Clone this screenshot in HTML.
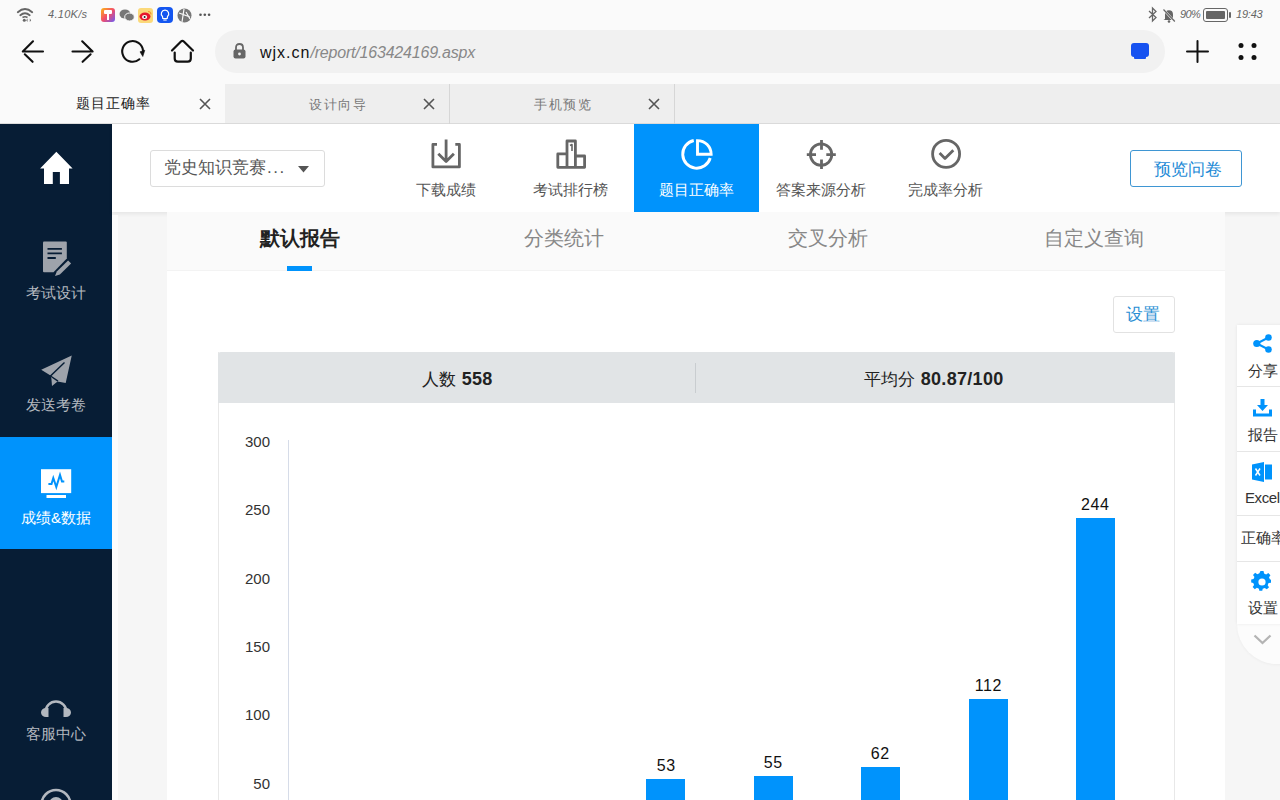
<!DOCTYPE html>
<html><head><meta charset="utf-8">
<style>
*{margin:0;padding:0;box-sizing:border-box}
html,body{width:1280px;height:800px;overflow:hidden;background:#f6f6f6;font-family:"Liberation Sans",sans-serif;position:relative}
.a{position:absolute}
.t{position:absolute;white-space:nowrap;line-height:1}
svg{position:absolute;overflow:visible}
</style></head><body>
<!-- status bar + toolbar -->
<div class="a" style="left:0;top:0;width:1280px;height:84px;background:#fafafa"></div>
<!-- wifi -->
<svg style="left:0;top:0" width="40" height="30" viewBox="0 0 40 30"><path d="M17.8 12.2 Q25 5.8 32.2 12.2" fill="none" stroke="#666" stroke-width="1.9" stroke-linecap="round"/><path d="M20.3 15.2 Q25 11.2 29.7 15.2" fill="none" stroke="#666" stroke-width="1.9" stroke-linecap="round"/><circle cx="24.3" cy="20.3" r="1.5" fill="#666"/><path d="M27.5 18.6 L27.5 22 L26.2 20.3Z M29.8 18.6 L29.8 22 L31.1 20.3Z" fill="#666"/><path d="M22.5 17.5 Q25 16 27.5 17.5" fill="none" stroke="#666" stroke-width="1.6"/></svg>
<div class="t" style="left:48px;top:9px;font-size:11px;color:#666;font-style:italic;letter-spacing:0.3px">4.10K/s</div>
<div class="a" style="left:101px;top:8px;width:14px;height:14px;border-radius:3px;background:linear-gradient(135deg,#fdb813,#f24d6b 50%,#6a5cf5)"></div>
<div class="a" style="left:104px;top:10px;width:8px;height:4px;background:#fff;border-radius:1px"></div><div class="a" style="left:107px;top:13px;width:2px;height:7px;background:#fff"></div>
<svg style="left:119px;top:8px" width="16" height="14" viewBox="0 0 16 14"><ellipse cx="6" cy="6" rx="5.5" ry="4.6" fill="#777"/><ellipse cx="10.5" cy="9" rx="4.8" ry="4" fill="#777" stroke="#fafafa" stroke-width="1"/></svg>
<div class="a" style="left:138px;top:8px;width:15px;height:15px;border-radius:3px;background:#fbd97a"></div>
<svg style="left:139px;top:10px" width="13" height="11" viewBox="0 0 13 11"><ellipse cx="6" cy="6.5" rx="5.5" ry="4" fill="#e6162d"/><ellipse cx="5.6" cy="7" rx="2.6" ry="2" fill="#fff"/><circle cx="5.6" cy="7" r="1" fill="#222"/><path d="M9 1.5 Q12 1.5 12 4.5" stroke="#f29a2e" stroke-width="1.2" fill="none"/></svg>
<div class="a" style="left:157px;top:7px;width:16px;height:16px;border-radius:4px;background:#1456f0"></div>
<svg style="left:157px;top:7px" width="16" height="16" viewBox="0 0 16 16"><path d="M8 3.2 A3.6 3.6 0 0 1 10.5 9.5 L10.2 11.5 L5.8 11.5 L5.5 9.5 A3.6 3.6 0 0 1 8 3.2Z" fill="none" stroke="#fff" stroke-width="1.2"/><path d="M6.3 13 L9.7 13" stroke="#fff" stroke-width="1.1"/></svg>
<svg style="left:177px;top:8px" width="15" height="15" viewBox="0 0 15 15"><circle cx="7.5" cy="7.5" r="7" fill="#777"/><path d="M2 5 L13 9 M7 1 L5 14 M9 4 L13 11" stroke="#fafafa" stroke-width="1.2" fill="none"/></svg>
<svg style="left:0;top:0" width="220" height="30"><circle cx="200.5" cy="14.8" r="1.3" fill="#555"/><circle cx="204.8" cy="14.8" r="1.3" fill="#555"/><circle cx="209.1" cy="14.8" r="1.3" fill="#555"/></svg>

<!-- right status -->
<svg style="left:1147px;top:7px" width="11" height="15" viewBox="0 0 11 15"><path d="M2 4 L9 10.5 L5.5 14 L5.5 1 L9 4.5 L2 11" fill="none" stroke="#666" stroke-width="1.3"/></svg>
<svg style="left:1162px;top:8px" width="14" height="15" viewBox="0 0 14 15"><path d="M3 11 L3 6.5 Q3 2.2 7 2.2 Q11 2.2 11 6.5 L11 11 L12.5 12 L1.5 12Z" fill="#666"/><circle cx="7" cy="13.5" r="1.3" fill="#666"/><path d="M1 1 L13 14" stroke="#fafafa" stroke-width="2.2"/><path d="M1.5 1.5 L12.8 13.5" stroke="#666" stroke-width="1.2"/></svg>
<div class="t" style="left:1180px;top:9px;font-size:11px;color:#666;font-style:italic;letter-spacing:-0.6px">90%</div>
<div class="a" style="left:1203px;top:8px;width:25px;height:14px;border:1.6px solid #666;border-radius:3px"></div>
<div class="a" style="left:1206px;top:11px;width:19px;height:8px;background:#666;border-radius:1px"></div>
<div class="a" style="left:1229px;top:12px;width:2px;height:6px;background:#666;border-radius:1px"></div>
<div class="t" style="left:1236px;top:9px;font-size:11px;color:#666;font-style:italic;letter-spacing:-0.2px">19:43</div>

<!-- nav buttons -->
<svg style="left:0;top:0" width="100" height="80" viewBox="0 0 100 80"><path d="M33 41.3 L22.8 51.5 L43 51.5 M24.8 54.3 L32.6 61.8" fill="none" stroke="#111" stroke-width="2.1" stroke-linecap="round" stroke-linejoin="round"/><path d="M82.2 41.3 L92.6 51.5 L72.5 51.5 M90.6 54.3 L82.6 61.8" fill="none" stroke="#111" stroke-width="2.1" stroke-linecap="round" stroke-linejoin="round"/></svg>

<svg style="left:0;top:0" width="220" height="80" viewBox="0 0 220 80"><path d="M139.4 59.3 A10.4 10.4 0 1 1 143 50.5" fill="none" stroke="#111" stroke-width="2.1" stroke-linecap="round"/><path d="M140 51.8 L144.8 50.2 L142.8 56.5 Z" fill="#111" stroke="#111" stroke-width="0.6" stroke-linejoin="round"/><path d="M174.7 52.5 L174.7 58.5 Q174.7 61.6 177.8 61.6 L187.7 61.6 Q190.8 61.6 190.8 58.5 L190.8 52.5 M172 50.5 L181 41.5 Q182.4 40.1 183.8 41.5 L193 50.5" fill="none" stroke="#111" stroke-width="2.2" stroke-linecap="round" stroke-linejoin="round"/></svg>


<!-- url bar -->
<div class="a" style="left:215px;top:30px;width:950px;height:43px;border-radius:21.5px;background:#f1f1f1"></div>
<svg style="left:233px;top:43px" width="13" height="16" viewBox="0 0 13 16"><path d="M3 7 L3 4.5 Q3 1 6.5 1 Q10 1 10 4.5 L10 7" fill="none" stroke="#666" stroke-width="1.8"/><rect x="0.5" y="6.5" width="12" height="9" rx="2" fill="#666"/><circle cx="6.5" cy="11" r="1.4" fill="#f1f1f1"/></svg>
<div class="t" style="left:260px;top:45px;font-size:16px;color:#111;letter-spacing:1px">wjx.cn<span style="color:#888;font-style:italic;letter-spacing:-0.2px">/report/163424169.aspx</span></div>
<div class="a" style="left:1131px;top:43px;width:18px;height:14px;border-radius:3px;background:#1652f0"></div>
<div class="a" style="left:1134px;top:56px;width:12px;height:3px;border-radius:1px;background:#1652f0"></div>
<svg style="left:1186px;top:40px" width="23" height="23" viewBox="0 0 23 23"><path d="M11.5 1 L11.5 22 M1 11.5 L22 11.5" stroke="#111" stroke-width="2" stroke-linecap="round"/></svg>
<svg style="left:1238px;top:42px" width="20" height="19" viewBox="0 0 20 19"><circle cx="3" cy="3.5" r="2.5" fill="#111"/><circle cx="16" cy="3.5" r="2.5" fill="#111"/><circle cx="3" cy="15.5" r="2.5" fill="#111"/><circle cx="16" cy="15.5" r="2.5" fill="#111"/></svg>

<!-- tabs -->
<div class="a" style="left:0;top:84px;width:1280px;height:40px;background:#eeeeee;border-bottom:1px solid #dcdcdc"></div>
<div class="a" style="left:0;top:84px;width:225px;height:40px;background:#fafafa;border-bottom:1px solid #dcdcdc"></div>
<div class="a" style="left:449px;top:84px;width:1px;height:40px;background:#d6d6d6"></div>
<div class="a" style="left:674px;top:84px;width:1px;height:40px;background:#d6d6d6"></div>
<div class="t" style="left:76px;top:97px;font-size:13.5px;color:#222;letter-spacing:1px">题目正确率</div>
<div class="t" style="left:309px;top:97.5px;font-size:13px;color:#777;letter-spacing:1.5px">设计向导</div>
<div class="t" style="left:534px;top:97.5px;font-size:13px;color:#777;letter-spacing:1.5px">手机预览</div>
<svg style="left:199px;top:98px" width="12" height="12" viewBox="0 0 12 12"><path d="M1 1 L11 11 M11 1 L1 11" stroke="#555" stroke-width="1.6"/></svg>
<svg style="left:423px;top:98px" width="12" height="12" viewBox="0 0 12 12"><path d="M1 1 L11 11 M11 1 L1 11" stroke="#555" stroke-width="1.6"/></svg>
<svg style="left:648px;top:98px" width="12" height="12" viewBox="0 0 12 12"><path d="M1 1 L11 11 M11 1 L1 11" stroke="#555" stroke-width="1.6"/></svg>

<!-- sidebar -->
<div class="a" style="left:0;top:124px;width:112px;height:676px;background:#071d35"></div>
<div class="a" style="left:0;top:437px;width:112px;height:112px;background:#0093fc"></div>
<svg style="left:0;top:0" width="112" height="800" viewBox="0 0 112 800">
<path d="M56.35 151.8 L72.6 168.6 L69 168.6 L69 184 L59.9 184 L59.9 172.1 L52.8 172.1 L52.8 184 L44 184 L44 168.6 L40.1 168.6 Z" fill="#fff"/>
<path d="M43 242.5 Q43 241.5 44 241.5 L65.8 241.5 Q66.8 241.5 66.8 242.5 L66.8 258.5 L53.5 272.3 L44 272.3 Q43 272.3 43 271.3 Z" fill="#9ea3ab"/>
<path d="M47.5 248.9 L61.9 248.9 M47.5 253.3 L61.9 253.3 M47.5 258 L55.8 258" stroke="#071d35" stroke-width="1.8"/>
<path d="M68.1 260.6 L71.1 263.6 L59.9 274.4 L55 276 L56.8 271.4 Z" fill="#9ea3ab"/>
<path d="M71.75 355.5 L41.2 369.8 L50.5 375.5 L51.4 378.6 L52 386 L57.5 381.6 L65.7 383 Z" fill="#9ea3ab"/>
<path d="M64.5 362.5 L50.5 376 L58 381.2" fill="none" stroke="#071d35" stroke-width="1.4"/>
<rect x="41" y="469.2" width="30.2" height="23.9" fill="#fff"/>
<rect x="46.5" y="495" width="19.5" height="3" fill="#fff"/>
<path d="M48.4 484 L51.5 484 L53.3 478 L56.3 487 L60 475 L62 481.5 L64.3 481.5" fill="none" stroke="#0093fc" stroke-width="2" stroke-linejoin="miter"/>
</svg>
<div class="t" style="left:26px;top:285px;font-size:15px;color:#b3b8bf">考试设计</div>

<div class="t" style="left:26px;top:397px;font-size:15px;color:#b3b8bf">发送考卷</div>

<div class="t" style="left:21px;top:510px;font-size:15px;color:#fff">成绩&amp;数据</div>
<svg style="left:0;top:0" width="112" height="800" viewBox="0 0 112 800"><path d="M45.5 712 A10.5 10.5 0 0 1 66.5 712" fill="none" stroke="#b3b8bf" stroke-width="2.4"/><path d="M48.5 708 L48.5 717 L46 717 A5 4.5 0 0 1 46 708 Z M63.5 708 L63.5 717 L66 717 A5 4.5 0 0 0 66 708 Z" fill="#b3b8bf"/><circle cx="56" cy="804.5" r="14.5" fill="none" stroke="#b3b8bf" stroke-width="2.6"/><circle cx="56" cy="804" r="7" fill="#b3b8bf"/></svg>
<div class="t" style="left:26px;top:726px;font-size:15px;color:#b3b8bf">客服中心</div>


<!-- header -->
<div class="a" style="left:112px;top:124px;width:1168px;height:88px;background:#fff;box-shadow:0 2px 4px rgba(0,0,0,.07)"></div>
<div class="a" style="left:150px;top:150px;width:175px;height:37px;border:1px solid #dcdcdc;border-radius:3px;background:#fff"></div>
<div class="t" style="left:164px;top:159px;font-size:17px;color:#555">党史知识竞赛<span style="letter-spacing:1.5px;margin-left:1px">...</span></div>
<svg style="left:298px;top:166px" width="11" height="7" viewBox="0 0 11 7"><path d="M0 0 L11 0 L5.5 6.5Z" fill="#555"/></svg>

<div class="a" style="left:634px;top:124px;width:125px;height:88px;background:#0093fc"></div>
<svg style="left:0;top:0" width="1280" height="800" viewBox="0 0 1280 800">
<g fill="none" stroke="#666" stroke-width="2.8" stroke-linecap="butt" stroke-linejoin="round">
<path d="M437 144.4 L432.9 144.4 L432.9 166.9 L459.4 166.9 L459.4 144.4 L455.3 144.4"/>
<path d="M446.1 139.5 L446.1 161.5 M438.3 153.7 L446.1 161.5 L453.9 153.7"/>
<path d="M557.8 167.3 L557.8 153.9 L567 153.9 L567 141 L575.4 141 L575.4 156 L584.6 156 L584.6 167.3 Z M567 153.9 L567 167.3 M575.4 156 L575.4 167.3"/>
<path d="M570 145.5 L572 144.5 L572 151" stroke-width="1.6"/>
<circle cx="821.1" cy="154.6" r="10.7"/>
<path d="M821.5 140 L821.5 149.8 M821.5 159.5 L821.5 169 M806.8 154.6 L816 154.6 M826.3 154.6 L835.8 154.6"/>
<circle cx="946.1" cy="153.9" r="13.5"/>
<path d="M939.6 153.1 L945 158.5 L953.3 150.2"/>
</g>
<g fill="none" stroke="#fff" stroke-width="2.9">
<path d="M693.75 140.5 A14 14 0 1 0 710.2 158"/>
<path d="M697.5 154.25 L697.5 140.6 A13.65 13.65 0 0 1 711.15 154.25 Z" stroke-linejoin="miter"/>
</g>
</svg>
<div class="t" style="left:416px;top:182px;font-size:15px;color:#555">下载成绩</div>
<div class="t" style="left:533px;top:182px;font-size:15px;color:#555">考试排行榜</div>
<div class="t" style="left:659px;top:182px;font-size:15px;color:#fff">题目正确率</div>
<div class="t" style="left:776px;top:182px;font-size:15px;color:#555">答案来源分析</div>
<div class="t" style="left:908px;top:182px;font-size:15px;color:#555">完成率分析</div>

<div class="a" style="left:1130px;top:150px;width:112px;height:37px;border:1px solid #3f96d3;border-radius:3px;background:#fff"></div>
<div class="t" style="left:1154px;top:161px;font-size:17.3px;color:#1d8ad6">预览问卷</div>

<!-- content card -->
<div class="a" style="left:167px;top:212px;width:1058px;height:588px;background:#fff"></div>
<div class="a" style="left:112px;top:215px;width:6px;height:585px;background:#fcfcfc"></div>
<div class="a" style="left:167px;top:212px;width:1058px;height:59px;background:#fafafa;border-bottom:1px solid #f3f3f3"></div>
<div class="t" style="left:260px;top:228px;font-size:20px;color:#222;font-weight:bold">默认报告</div>
<div class="a" style="left:287px;top:266px;width:25px;height:5px;background:#0093fc"></div>
<div class="t" style="left:524px;top:228px;font-size:20px;color:#888">分类统计</div>
<div class="t" style="left:788px;top:228px;font-size:20px;color:#888">交叉分析</div>
<div class="t" style="left:1044px;top:228px;font-size:20px;color:#888">自定义查询</div>

<div class="a" style="left:1113px;top:296px;width:62px;height:37px;border:1px solid #e2e2e2;border-radius:3px;background:#fff"></div>
<div class="t" style="left:1126px;top:306px;font-size:17px;color:#2b8fd4">设置</div>

<div class="a" style="left:218px;top:352px;width:957px;height:460px;border:1px solid #e8e8e8;border-top:none;background:#fff"></div>
<div class="a" style="left:218px;top:352px;width:957px;height:51px;background:#e1e4e6;border-radius:3px 3px 0 0"></div>
<div class="a" style="left:695px;top:363px;width:1px;height:30px;background:#c9cdd0"></div>
<div class="t" style="left:422px;top:370px;font-size:17px;color:#222">人数 <b style="font-size:18px;margin-left:1px;letter-spacing:0.3px">558</b></div>
<div class="t" style="left:864px;top:370px;font-size:17px;color:#222">平均分 <b style="font-size:18px;margin-left:1px;letter-spacing:0.3px">80.87/100</b></div>

<!-- chart -->
<div class="a" style="left:288px;top:440px;width:1px;height:360px;background:#d6dce8"></div>
<div class="t" style="left:200px;width:70px;text-align:right;top:434px;font-size:15px;color:#333">300</div>
<div class="t" style="left:200px;width:70px;text-align:right;top:502px;font-size:15px;color:#333">250</div>
<div class="t" style="left:200px;width:70px;text-align:right;top:571px;font-size:15px;color:#333">200</div>
<div class="t" style="left:200px;width:70px;text-align:right;top:639px;font-size:15px;color:#333">150</div>
<div class="t" style="left:200px;width:70px;text-align:right;top:707px;font-size:15px;color:#333">100</div>
<div class="t" style="left:200px;width:70px;text-align:right;top:776px;font-size:15px;color:#333">50</div>

<div class="a" style="left:646px;top:779px;width:39px;height:30px;background:#0093fc"></div>
<div class="a" style="left:754px;top:776px;width:39px;height:30px;background:#0093fc"></div>
<div class="a" style="left:861px;top:767px;width:39px;height:40px;background:#0093fc"></div>
<div class="a" style="left:969px;top:699px;width:39px;height:110px;background:#0093fc"></div>
<div class="a" style="left:1076px;top:518px;width:39px;height:290px;background:#0093fc"></div>
<div class="t" style="left:626px;width:80px;text-align:center;top:758px;font-size:16px;color:#111;letter-spacing:0.6px;text-indent:0.6px">53</div>
<div class="t" style="left:733px;width:80px;text-align:center;top:755px;font-size:16px;color:#111;letter-spacing:0.6px;text-indent:0.6px">55</div>
<div class="t" style="left:840px;width:80px;text-align:center;top:746px;font-size:16px;color:#111;letter-spacing:0.6px;text-indent:0.6px">62</div>
<div class="t" style="left:948px;width:80px;text-align:center;top:678px;font-size:16px;color:#111;letter-spacing:0.6px;text-indent:0.6px">112</div>
<div class="t" style="left:1055px;width:80px;text-align:center;top:497px;font-size:16px;color:#111;letter-spacing:0.6px;text-indent:0.6px">244</div>

<!-- right float toolbar -->
<div class="a" style="left:1237px;top:624px;width:50px;height:40px;background:#fcfcfc;border-radius:0 0 0 40px;box-shadow:0 1px 3px rgba(0,0,0,.04)"></div>
<div class="a" style="left:1237px;top:325px;width:50px;height:299px;background:#fff;box-shadow:0 0 3px rgba(0,0,0,.08)"></div>
<div class="a" style="left:1237px;top:386px;width:43px;height:1px;background:#e6e6e6"></div>
<div class="a" style="left:1237px;top:451px;width:43px;height:1px;background:#e6e6e6"></div>
<div class="a" style="left:1237px;top:515px;width:43px;height:1px;background:#e6e6e6"></div>
<div class="a" style="left:1237px;top:561px;width:43px;height:1px;background:#e6e6e6"></div>
<svg style="left:1253px;top:334px" width="19" height="19" viewBox="0 0 19 19"><circle cx="15.5" cy="3.5" r="3.3" fill="#0093fc"/><circle cx="3.8" cy="9.5" r="3.6" fill="#0093fc"/><circle cx="15.5" cy="15.5" r="3.3" fill="#0093fc"/><path d="M15.5 3.5 L3.8 9.5 L15.5 15.5" fill="none" stroke="#0093fc" stroke-width="2"/></svg>
<div class="t" style="left:1248px;top:363px;font-size:15px;color:#333">分享</div>
<svg style="left:1253px;top:399px" width="19" height="18" viewBox="0 0 19 18"><path d="M7.5 0 L11.5 0 L11.5 6 L15 6 L9.5 12 L4 6 L7.5 6Z" fill="#0093fc"/><path d="M1.5 10.5 L1.5 16 L17.5 16 L17.5 10.5" fill="none" stroke="#0093fc" stroke-width="3"/></svg>
<div class="t" style="left:1248px;top:427px;font-size:15px;color:#333">报告</div>
<svg style="left:1252px;top:462px" width="20" height="20" viewBox="0 0 20 20"><path d="M0 2.5 L12 0 L12 20 L0 17.5Z" fill="#0093fc"/><rect x="13" y="2.5" width="7" height="15" fill="#0093fc"/><path d="M3.5 6.5 L8 13.5 M8 6.5 L3.5 13.5" stroke="#fff" stroke-width="1.5"/></svg>
<div class="t" style="left:1245px;top:490px;font-size:15px;color:#333;letter-spacing:-0.4px">Excel</div>
<div class="t" style="left:1241px;top:530px;font-size:15px;color:#333">正确率</div>
<svg style="left:1252px;top:572px" width="20" height="20" viewBox="0 0 20 20"><path d="M8.3 0 L11.7 0 L12.3 2.8 L14.6 3.8 L17 2.2 L19.4 4.6 L17.8 7 L18.7 9.2 L20 9.6 L20 13 L17.3 13.4 L16.3 15.7 L17.8 18 L15.4 20.4 L13 18.8 L10.8 19.7 L10.3 22 L7 22 L6.6 19.6 L4.3 18.6 L2 20.2 L-0.4 17.8 L1.2 15.5 L0.3 13.2 L-2 12.8 L-2 9.4 L0.6 9 L1.6 6.7 L0 4.4 L2.4 2 L4.8 3.6 L7.1 2.6Z" transform="translate(1 -1) scale(0.9)" fill="#0093fc"/><circle cx="10" cy="10" r="3.6" fill="#fff"/></svg>
<div class="t" style="left:1248px;top:600px;font-size:15px;color:#333">设置</div>
<svg style="left:1253px;top:634px" width="19" height="11" viewBox="0 0 19 11"><path d="M1.5 1.5 L9.5 9 L17.5 1.5" fill="none" stroke="#b4b4b4" stroke-width="2.3"/></svg>
</body></html>
